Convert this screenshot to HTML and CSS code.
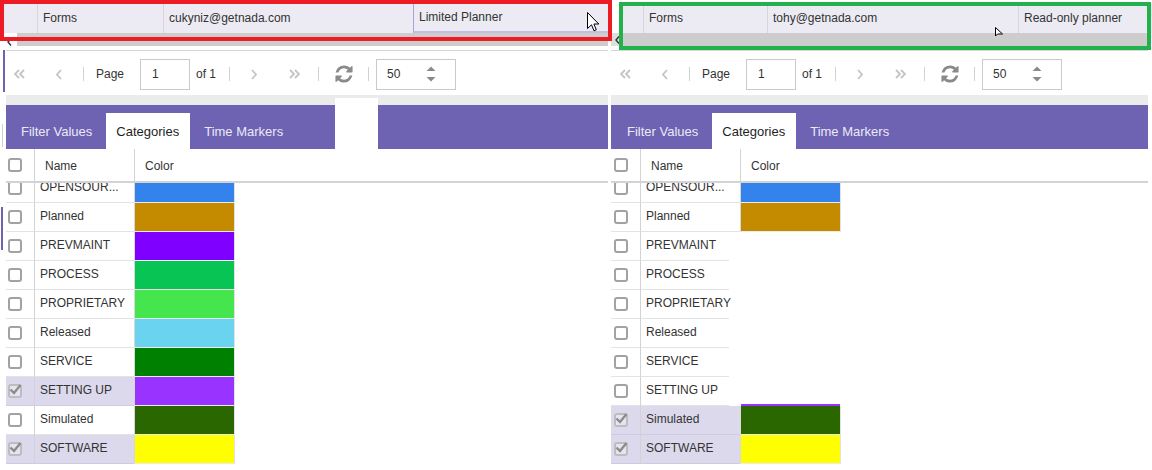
FILE: index.html
```html
<!DOCTYPE html>
<html>
<head>
<meta charset="utf-8">
<title>Categories</title>
<link rel="stylesheet" href="styles.css">
</head>
<body>
<div class="page">
  <section class="pane pane-left">
    <div class="grid-top">
      <div class="grid-row">
        <div class="gcell g-blank"></div>
        <div class="gcell g-form">Forms</div>
        <div class="gcell g-mail">cukyniz@getnada.com</div>
        <div class="gcell g-role g-focus">Limited Planner</div>
      </div>
      <div class="hscroll">
        <span class="hs-arrow"><svg width="5" height="8" viewBox="0 0 5 8"><path d="M4 0.5 L1 4 L4 7.5" fill="none" stroke="#333" stroke-width="1.4"/></svg></span>
        <span class="hs-bar"></span>
      </div>
    </div>
    <div class="lower">
      <div class="gutter">
        <span class="gm gm1"></span>
        <span class="gm gm-gray"></span>
        <span class="gm gm2"></span>
      </div>
      <div class="main">
        <div class="toolbar">
          <span class="tb-btn tb-first"><svg width="13" height="10" viewBox="0 0 13 10"><path d="M6 1 L2 5 L6 9 M11 1 L7 5 L11 9" fill="none" stroke="#c4c4c4" stroke-width="1.8"/></svg></span>
          <span class="tb-btn tb-prev"><svg width="8" height="11" viewBox="0 0 8 11"><path d="M6 1 L2 5.5 L6 10" fill="none" stroke="#c4c4c4" stroke-width="1.8"/></svg></span>
          <span class="tb-sep sep1"></span>
          <span class="tb-label tb-page">Page</span>
          <span class="tb-input tb-input-page">1</span>
          <span class="tb-label tb-of">of 1</span>
          <span class="tb-sep sep2"></span>
          <span class="tb-btn tb-next"><svg width="8" height="11" viewBox="0 0 8 11"><path d="M2 1 L6 5.5 L2 10" fill="none" stroke="#c4c4c4" stroke-width="1.8"/></svg></span>
          <span class="tb-btn tb-last"><svg width="13" height="10" viewBox="0 0 13 10"><path d="M2 1 L6 5 L2 9 M7 1 L11 5 L7 9" fill="none" stroke="#c4c4c4" stroke-width="1.8"/></svg></span>
          <span class="tb-sep sep3"></span>
          <span class="tb-btn tb-refresh"><svg width="20" height="20" viewBox="0 0 1792 1792"><path fill="#8a8a8a" d="M1639 1056q0 5-1 7-64 268-268 434.5t-478 166.5q-146 0-282.5-55t-243.5-157l-129 129q-19 19-45 19t-45-19-19-45v-448q0-26 19-45t45-19h448q26 0 45 19t19 45-19 45l-137 137q71 66 161 102t187 36q134 0 250-65t186-179q11-17 53-117 8-23 30-23h192q13 0 22.5 9.5t9.5 22.5zm25-800v448q0 26-19 45t-45 19h-448q-26 0-45-19t-19-45 19-45l138-138q-148-137-349-137-134 0-250 65t-186 179q-11 17-53 117-8 23-30 23h-199q-13 0-22.5-9.5t-9.5-22.5v-7q65-268 270-434.5t480-166.5q146 0 284 55.5t245 156.5l130-129q19-19 45-19t45 19 19 45z"/></svg></span>
          <span class="tb-sep sep4"></span>
          <span class="tb-input tb-input-size">50<svg class="spin" width="10" height="16" viewBox="0 0 10 16"><path d="M0.5 5 L5 0.5 L9.5 5 Z M0.5 11 L9.5 11 L5 15.5 Z" fill="#8a8a8a"/></svg></span>
        </div>
        <div class="tabzone">
          <div class="tz-seg tz-tabs">
            <div class="tz-gray"></div>
            <div class="tabbar">
              <span class="tab tab-first">Filter Values</span>
              <span class="tab active">Categories</span>
              <span class="tab">Time Markers</span>
            </div>
          </div>
          <div class="tz-hole"><div class="tz-gray"></div></div>
          <div class="tz-seg tz-fill">
            <div class="tz-gray"></div>
            <div class="tabbar"></div>
          </div>
        </div>
        <div class="grid-head">
          <div class="h-chk"><span class="cb"></span></div>
          <div class="h-name">Name</div>
          <div class="h-color">Color</div>
        </div>
        <div class="grid-body">
          <div class="rows">
            <div class="row"><div class="c-chk"><span class="cb"></span></div><div class="c-name">OPENSOUR...</div><div class="c-color"><span class="swatch" style="background:#3483ec"></span></div></div>
            <div class="row"><div class="c-chk"><span class="cb"></span></div><div class="c-name">Planned</div><div class="c-color"><span class="swatch" style="background:#c48a00"></span></div></div>
            <div class="row"><div class="c-chk"><span class="cb"></span></div><div class="c-name">PREVMAINT</div><div class="c-color"><span class="swatch" style="background:#8000ff"></span></div></div>
            <div class="row"><div class="c-chk"><span class="cb"></span></div><div class="c-name">PROCESS</div><div class="c-color"><span class="swatch" style="background:#08c455"></span></div></div>
            <div class="row"><div class="c-chk"><span class="cb"></span></div><div class="c-name">PROPRIETARY</div><div class="c-color"><span class="swatch" style="background:#45e54d"></span></div></div>
            <div class="row"><div class="c-chk"><span class="cb"></span></div><div class="c-name">Released</div><div class="c-color"><span class="swatch" style="background:#6ad3f0"></span></div></div>
            <div class="row"><div class="c-chk"><span class="cb"></span></div><div class="c-name">SERVICE</div><div class="c-color"><span class="swatch" style="background:#008000"></span></div></div>
            <div class="row sel"><div class="c-chk"><span class="cb on"><svg width="14" height="14" viewBox="0 0 14 14"><path d="M2.5 6.5 L6 10 L12.5 2" fill="none" stroke="#8c8c8c" stroke-width="2.4"/></svg></span></div><div class="c-name">SETTING UP</div><div class="c-color"><span class="swatch" style="background:#9933ff"></span></div></div>
            <div class="row"><div class="c-chk"><span class="cb"></span></div><div class="c-name">Simulated</div><div class="c-color"><span class="swatch" style="background:#2b6700"></span></div></div>
            <div class="row sel"><div class="c-chk"><span class="cb on"><svg width="14" height="14" viewBox="0 0 14 14"><path d="M2.5 6.5 L6 10 L12.5 2" fill="none" stroke="#8c8c8c" stroke-width="2.4"/></svg></span></div><div class="c-name">SOFTWARE</div><div class="c-color"><span class="swatch" style="background:#ffff00"></span></div></div>
          </div>
        </div>
      </div>
    </div>
  </section>

  <section class="pane pane-right">
    <div class="grid-top">
      <div class="grid-row">
        <div class="gcell g-blank"></div>
        <div class="gcell g-form">Forms</div>
        <div class="gcell g-mail">tohy@getnada.com</div>
        <div class="gcell g-role">Read-only planner</div>
      </div>
      <div class="hscroll">
        <span class="hs-arrow"><svg width="5" height="8" viewBox="0 0 5 8"><path d="M4 0.5 L1 4 L4 7.5" fill="none" stroke="#333" stroke-width="1.4"/></svg></span>
        <span class="hs-bar"></span>
      </div>
    </div>
    <div class="lower">
      <div class="main">
        <div class="toolbar">
          <span class="tb-btn tb-first"><svg width="13" height="10" viewBox="0 0 13 10"><path d="M6 1 L2 5 L6 9 M11 1 L7 5 L11 9" fill="none" stroke="#c4c4c4" stroke-width="1.8"/></svg></span>
          <span class="tb-btn tb-prev"><svg width="8" height="11" viewBox="0 0 8 11"><path d="M6 1 L2 5.5 L6 10" fill="none" stroke="#c4c4c4" stroke-width="1.8"/></svg></span>
          <span class="tb-sep sep1"></span>
          <span class="tb-label tb-page">Page</span>
          <span class="tb-input tb-input-page">1</span>
          <span class="tb-label tb-of">of 1</span>
          <span class="tb-sep sep2"></span>
          <span class="tb-btn tb-next"><svg width="8" height="11" viewBox="0 0 8 11"><path d="M2 1 L6 5.5 L2 10" fill="none" stroke="#c4c4c4" stroke-width="1.8"/></svg></span>
          <span class="tb-btn tb-last"><svg width="13" height="10" viewBox="0 0 13 10"><path d="M2 1 L6 5 L2 9 M7 1 L11 5 L7 9" fill="none" stroke="#c4c4c4" stroke-width="1.8"/></svg></span>
          <span class="tb-sep sep3"></span>
          <span class="tb-btn tb-refresh"><svg width="20" height="20" viewBox="0 0 1792 1792"><path fill="#8a8a8a" d="M1639 1056q0 5-1 7-64 268-268 434.5t-478 166.5q-146 0-282.5-55t-243.5-157l-129 129q-19 19-45 19t-45-19-19-45v-448q0-26 19-45t45-19h448q26 0 45 19t19 45-19 45l-137 137q71 66 161 102t187 36q134 0 250-65t186-179q11-17 53-117 8-23 30-23h192q13 0 22.5 9.5t9.5 22.5zm25-800v448q0 26-19 45t-45 19h-448q-26 0-45-19t-19-45 19-45l138-138q-148-137-349-137-134 0-250 65t-186 179q-11 17-53 117-8 23-30 23h-199q-13 0-22.5-9.5t-9.5-22.5v-7q65-268 270-434.5t480-166.5q146 0 284 55.5t245 156.5l130-129q19-19 45-19t45 19 19 45z"/></svg></span>
          <span class="tb-sep sep4"></span>
          <span class="tb-input tb-input-size">50<svg class="spin" width="10" height="16" viewBox="0 0 10 16"><path d="M0.5 5 L5 0.5 L9.5 5 Z M0.5 11 L9.5 11 L5 15.5 Z" fill="#8a8a8a"/></svg></span>
        </div>
        <div class="tabzone">
          <div class="tz-seg tz-tabs">
            <div class="tz-gray"></div>
            <div class="tabbar">
              <span class="tab tab-first">Filter Values</span>
              <span class="tab active">Categories</span>
              <span class="tab">Time Markers</span>
            </div>
          </div>
        </div>
        <div class="grid-head">
          <div class="h-chk"><span class="cb"></span></div>
          <div class="h-name">Name</div>
          <div class="h-color">Color</div>
        </div>
        <div class="grid-body">
          <div class="rows">
            <div class="row"><div class="c-chk"><span class="cb"></span></div><div class="c-name">OPENSOUR...</div><div class="c-color"><span class="swatch" style="background:#3483ec"></span></div></div>
            <div class="row"><div class="c-chk"><span class="cb"></span></div><div class="c-name">Planned</div><div class="c-color"><span class="swatch" style="background:#c48a00"></span></div></div>
            <div class="row nocolor"><div class="c-chk"><span class="cb"></span></div><div class="c-name">PREVMAINT</div></div>
            <div class="row nocolor"><div class="c-chk"><span class="cb"></span></div><div class="c-name">PROCESS</div></div>
            <div class="row nocolor"><div class="c-chk"><span class="cb"></span></div><div class="c-name">PROPRIETARY</div></div>
            <div class="row nocolor"><div class="c-chk"><span class="cb"></span></div><div class="c-name">Released</div></div>
            <div class="row nocolor"><div class="c-chk"><span class="cb"></span></div><div class="c-name">SERVICE</div></div>
            <div class="row nocolor"><div class="c-chk"><span class="cb"></span></div><div class="c-name">SETTING UP</div></div>
            <div class="row sel"><div class="c-chk"><span class="cb on"><svg width="14" height="14" viewBox="0 0 14 14"><path d="M2.5 6.5 L6 10 L12.5 2" fill="none" stroke="#8c8c8c" stroke-width="2.4"/></svg></span></div><div class="c-name">Simulated</div><div class="c-color"><span class="swatch swatch-edge" style="background:#2b6700"></span></div></div>
            <div class="row sel"><div class="c-chk"><span class="cb on"><svg width="14" height="14" viewBox="0 0 14 14"><path d="M2.5 6.5 L6 10 L12.5 2" fill="none" stroke="#8c8c8c" stroke-width="2.4"/></svg></span></div><div class="c-name">SOFTWARE</div><div class="c-color"><span class="swatch" style="background:#ffff00"></span></div></div>
          </div>
        </div>
      </div>
    </div>
  </section>

  <div class="mark mark-red"></div>
  <div class="mark mark-green"></div>
  <svg class="cursor cursor-a" width="13" height="20" viewBox="0 0 13 20"><path d="M0.5 0.5 L0.5 16.5 L4.5 12.8 L7 18.8 L9.3 17.8 L6.9 12 L11.8 12 Z" fill="#fff" stroke="#000" stroke-width="1"/></svg>
  <svg class="cursor cursor-b" width="9" height="10" viewBox="0 0 9 10"><path d="M0.5 0.5 L0.5 9 L2.5 7 L7.5 7 Z" fill="#fff" stroke="#000" stroke-width="1"/></svg>
</div>
</body>
</html>
```

FILE: styles.css
```css
* { box-sizing: border-box; }
html, body { margin: 0; padding: 0; }
body {
  width: 1152px;
  height: 470px;
  overflow: hidden;
  background: #fff;
  font-family: "Liberation Sans", Arial, sans-serif;
  color: #333;
}
.page { position: relative; display: flex; gap: 3px; height: 470px; }
.pane { display: flex; flex-direction: column; flex: none; }
.pane-left { width: 608px; }
.pane-right { width: 541px; }

/* top user grid strip */
.grid-top { height: 50px; padding-top: 4px; flex: none; }
.grid-row { display: flex; height: 29px; background: #ecebf4; font-size: 12px; color: #333; }
.pane-left .grid-row { margin-left: 4px; }
.pane-right .grid-row { margin-left: 8px; }
.gcell { flex: none; line-height: 29px; padding-left: 5px; white-space: nowrap; overflow: hidden; border-left: 1px solid #d5d4df; }
.g-blank { border-left: 0; padding: 0; }
.pane-left .g-blank { width: 33px; }
.pane-left .g-form { width: 126px; }
.pane-left .g-mail { width: 250px; }
.pane-right .g-blank { width: 24px; }
.pane-right .g-form { width: 124px; }
.pane-right .g-mail { width: 251px; }
.g-role { flex: 1; }
.g-focus { border-left-color: #aaa2d8; border-bottom: 2px solid #c3bce4; line-height: 27px; }
.hscroll { display: flex; height: 13px; }
.hs-arrow { flex: none; display: flex; align-items: center; }
.pane-left .hs-arrow { width: 17px; padding-left: 7px; padding-top: 4px; }
.pane-right .hs-arrow { width: 12px; justify-content: center; background: #dedede; }
.hs-bar { flex: 1; background: #cdcdcd; }
.pane-right .hs-bar { margin-right: 4px; }

/* lower area */
.lower { display: flex; flex: 1; min-height: 0; }
.gutter { width: 6px; flex: none; display: flex; flex-direction: column; }
.gm { display: block; width: 2px; flex: none; }
.gm1 { margin-left: 3px; height: 42px; background: #6e62b2; }
.gm-gray { margin-left: 2px; width: 1px; height: 23px; margin-top: 32px; background: #d0d0d0; }
.gm2 { margin-left: 1px; height: 43px; margin-top: 60px; background: #6e62b2; }
.main { flex: 1; display: flex; flex-direction: column; min-width: 0; }
.pane-right .main { flex: none; width: 537px; }

/* paging toolbar */
.toolbar { flex: none; height: 45px; padding-top: 2px; border-top: 1px solid #d6d6d6; display: flex; align-items: center; font-size: 12px; color: #333; }
.pane-right .toolbar { padding-left: 1px; }
.tb-btn { flex: none; display: flex; align-items: center; justify-content: center; height: 20px; }
.tb-first { width: 27px; }
.tb-prev { width: 26px; margin-left: 13px; }
.tb-next { width: 26px; margin-left: 11px; }
.tb-last { width: 26px; margin-left: 14px; }
.tb-refresh { width: 25px; margin-left: 12px; }
.tb-sep { flex: none; width: 1px; height: 14px; background: #d2d2d2; }
.sep1 { margin-left: 11px; }
.sep2 { margin-left: 13px; }
.sep3 { margin-left: 11px; }
.sep4 { margin-left: 12px; }
.tb-label { flex: none; white-space: nowrap; }
.tb-page { margin-left: 12px; }
.tb-of { margin-left: 6px; }
.tb-input { flex: none; height: 31px; border: 1px solid #cacaca; display: flex; align-items: center; background: #fff; }
.tb-input-page { width: 50px; margin-left: 16px; padding-left: 11px; }
.tb-input-size { width: 80px; margin-left: 7px; padding-left: 10px; }
.spin { margin-left: auto; margin-right: 19px; }

/* tab strip */
.tabzone { display: flex; height: 54px; flex: none; }
.tz-seg { display: flex; flex-direction: column; }
.pane-left .tz-tabs { width: 329px; flex: none; }
.pane-right .tz-tabs { flex: 1; }
.tz-hole { width: 43px; flex: none; }
.tz-fill { flex: 1; }
.tz-gray { height: 10px; background: #ebebeb; flex: none; }
.tz-hole .tz-gray { height: 3px; }
.tabbar { flex: 1; background: #6e62b2; display: flex; align-items: flex-end; }
.tab { height: 36px; line-height: 35px; padding-top: 1px; font-size: 13px; color: #ebe9f6; padding-left: 14px; padding-right: 14px; white-space: nowrap; }
.tab-first { padding-left: 15px; }
.pane-right .tab-first { padding-left: 16px; }
.tab.active { background: #fff; color: #1e1e1e; padding-left: 10px; padding-right: 11px; }

/* category grid */
.grid-head { display: flex; height: 34px; border-bottom: 2px solid #d3d3d3; font-size: 12px; color: #333; flex: none; }
.h-chk { flex: none; display: flex; align-items: center; }
.pane-left .h-chk, .pane-left .c-chk { width: 28px; padding-left: 2px; }
.pane-right .h-chk, .pane-right .c-chk { width: 29px; padding-left: 3px; }
.h-name { width: 100px; flex: none; border-left: 1px solid #d3d3d3; padding-left: 10px; line-height: 34px; }
.h-color { flex: 1; border-left: 1px solid #d3d3d3; padding-left: 10px; line-height: 34px; }
.grid-body { flex: 1; overflow: hidden; }
.rows { margin-top: -9px; }
.row { display: flex; height: 29px; font-size: 12px; color: #333; }
.c-chk { flex: none; display: flex; align-items: center; border-bottom: 1px solid #e3e3e3; }
.c-name { flex: none; width: 100px; border-left: 1px solid #d3d3d3; border-bottom: 1px solid #e3e3e3; padding-left: 5px; line-height: 26px; white-space: nowrap; }
.row.nocolor .c-name { width: 89px; }
.c-color { flex: none; width: 101px; border-left: 1px solid #d8d8d8; border-right: 1px solid #e2e2e2; border-bottom: 1px solid #ececec; }
.swatch { display: block; height: 28px; }
.swatch-edge { box-shadow: 0 -2px 0 #9933ff; }
.row.sel .c-chk, .row.sel .c-name { background: #dcd9ec; border-bottom-color: #cfcbe2; }

.cb { display: block; position: relative; width: 14px; height: 14px; border: 2px solid #a2a2a2; border-radius: 3px; background: #fff; }
.cb.on { border-color: #bdbdbd; background: #e6e4f0; }
.cb svg { position: absolute; left: -2px; top: -3px; }

/* annotation overlays */
.mark { position: absolute; pointer-events: none; }
.mark-red { left: 0; top: 0; width: 612px; height: 41px; border: 4px solid #ed1c24; }
.mark-green { left: 619px; top: 2px; width: 532px; height: 48px; border: 4px solid #22b14c; }
.cursor { position: absolute; }
.cursor-a { left: 587px; top: 12px; }
.cursor-b { left: 995px; top: 27px; }
```
